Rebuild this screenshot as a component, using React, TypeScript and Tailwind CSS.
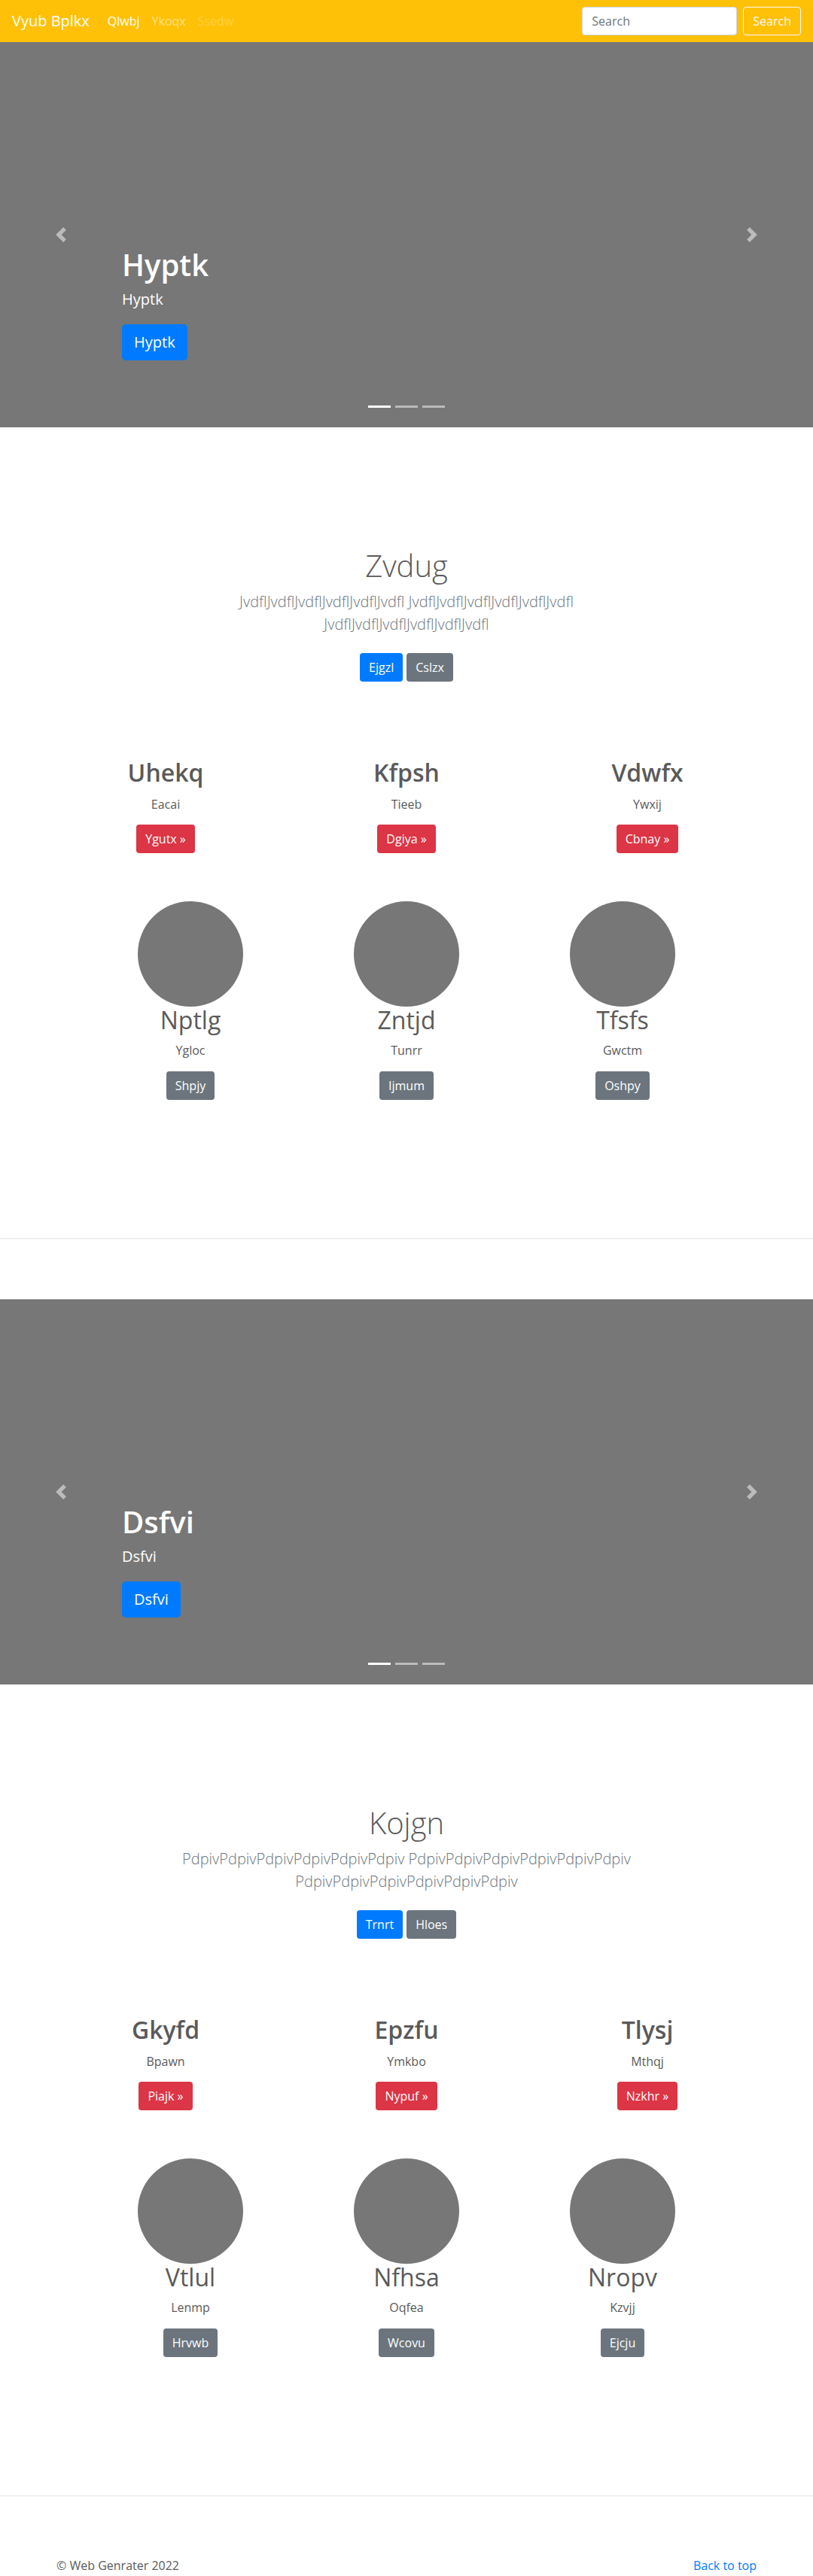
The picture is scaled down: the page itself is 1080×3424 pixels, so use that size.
type Feature = { title: string; text: string; button: string };

type Block = {
  slide: string;
  heading: string;
  lead: string;
  primary: string;
  secondary: string;
  features: Feature[];
  marketing: Feature[];
};

const BLOCKS: Block[] = [
  {
    slide: "Hyptk",
    heading: "Zvdug",
    lead: "JvdflJvdflJvdflJvdflJvdflJvdfl JvdflJvdflJvdflJvdflJvdflJvdfl JvdflJvdflJvdflJvdflJvdflJvdfl",
    primary: "Ejgzl",
    secondary: "Cslzx",
    features: [
      { title: "Uhekq", text: "Eacai", button: "Ygutx »" },
      { title: "Kfpsh", text: "Tieeb", button: "Dgiya »" },
      { title: "Vdwfx", text: "Ywxij", button: "Cbnay »" },
    ],
    marketing: [
      { title: "Nptlg", text: "Ygloc", button: "Shpjy" },
      { title: "Zntjd", text: "Tunrr", button: "Ijmum" },
      { title: "Tfsfs", text: "Gwctm", button: "Oshpy" },
    ],
  },
  {
    slide: "Dsfvi",
    heading: "Kojgn",
    lead: "PdpivPdpivPdpivPdpivPdpivPdpiv PdpivPdpivPdpivPdpivPdpivPdpiv PdpivPdpivPdpivPdpivPdpivPdpiv",
    primary: "Trnrt",
    secondary: "Hloes",
    features: [
      { title: "Gkyfd", text: "Bpawn", button: "Piajk »" },
      { title: "Epzfu", text: "Ymkbo", button: "Nypuf »" },
      { title: "Tlysj", text: "Mthqj", button: "Nzkhr »" },
    ],
    marketing: [
      { title: "Vtlul", text: "Lenmp", button: "Hrvwb" },
      { title: "Nfhsa", text: "Oqfea", button: "Wcovu" },
      { title: "Nropv", text: "Kzvjj", button: "Ejcju" },
    ],
  },
];

function Chevron(props: { next?: boolean }) {
  // same glyph bootstrap 4 uses for carousel controls
  const d = props.next
    ? "M2.75 0l-1.5 1.5L3.75 4l-2.5 2.5L2.75 8l4-4-4-4z"
    : "M5.25 0l-4 4 4 4 1.5-1.5L4.25 4l2.5-2.5L5.25 0z";
  return (
    <svg width="20" height="20" viewBox="0 0 8 8" fill="#fff">
      <path d={d} />
    </svg>
  );
}

function Navbar() {
  return (
    <nav className="flex h-14 items-center bg-[#ffc107] px-4">
      <a className="mr-4 text-xl leading-[30px] text-white">Vyub Bplkx</a>
      <ul className="flex">
        <li className="px-2 text-white">Qlwbj</li>
        <li className="px-2 text-white/50">Ykoqx</li>
        <li className="px-2 text-white/25">Ssedw</li>
      </ul>
      <form className="ml-auto flex items-center">
        <input
          placeholder="Search"
          className="mr-2 h-[38px] w-[206px] rounded border border-[#ced4da] bg-white px-3 text-base text-[#495057] placeholder:text-[#6c757d]"
        />
        <button
          type="button"
          className="h-[38px] rounded border border-[#f8f9fa] px-3 text-base text-[#f8f9fa]"
        >
          Search
        </button>
      </form>
    </nav>
  );
}

function Carousel(props: { title: string }) {
  return (
    <div className="relative h-[512px] bg-[#777]">
      <div className="absolute top-0 bottom-0 left-0 flex w-[15%] items-center justify-center opacity-50">
        <Chevron />
      </div>
      <div className="absolute top-0 right-0 bottom-0 flex w-[15%] items-center justify-center opacity-50">
        <Chevron next />
      </div>
      <div className="absolute top-[272px] right-[15%] left-[15%] text-white">
        <h1 className="mb-[7px] text-[40px] leading-[48px] font-semibold">
          {props.title}
        </h1>
        <p className="mb-[18px] text-xl leading-[30px]">{props.title}</p>
        <a className="inline-flex h-12 items-center rounded-[5px] bg-[#007bff] px-4 text-xl">
          {props.title}
        </a>
      </div>
      <ol className="absolute top-[483px] left-1/2 flex -translate-x-1/2 gap-[6px]">
        <li className="h-[3px] w-[30px] bg-white" />
        <li className="h-[3px] w-[30px] bg-white/50" />
        <li className="h-[3px] w-[30px] bg-white/50" />
      </ol>
    </div>
  );
}

function Section(props: { block: Block }) {
  const b = props.block;
  return (
    <>
      <Carousel title={b.slide} />

      <section className="pt-[160px] text-center">
        <div className="mx-auto max-w-[640px] px-[15px]">
          <h1 className="mb-[9px] text-[40px] leading-[48px] font-light">
            {b.heading}
          </h1>
          <p className="mb-[23px] text-xl leading-[30px] font-light text-[#6c757d]">
            {b.lead}
          </p>
          <div className="flex justify-center gap-[5px]">
            <a className="flex h-[38px] items-center rounded bg-[#007bff] px-3 text-white">
              {b.primary}
            </a>
            <a className="flex h-[38px] items-center rounded bg-[#6c757d] px-3 text-white">
              {b.secondary}
            </a>
          </div>
        </div>
      </section>

      <div className="mx-auto mt-[102px] grid w-[960px] grid-cols-3">
        {b.features.map((f) => (
          <div key={f.title} className="flex flex-col items-center">
            <h2 className="mb-[11px] text-[32px] leading-[38px] font-semibold">
              {f.title}
            </h2>
            <p className="mb-[15px] leading-6">{f.text}</p>
            <a className="flex h-[38px] items-center rounded bg-[#dc3545] px-3 text-white">
              {f.button}
            </a>
          </div>
        ))}
      </div>

      <div className="mx-auto mt-16 grid w-[861px] grid-cols-3">
        {b.marketing.map((m) => (
          <div key={m.title} className="flex flex-col items-center">
            <div className="h-[140px] w-[140px] rounded-full bg-[#777]" />
            <h2 className="-mt-px mb-[9px] text-[32px] leading-[38px] font-normal">
              {m.title}
            </h2>
            <p className="mb-4 leading-6">{m.text}</p>
            <a className="flex h-[38px] items-center rounded bg-[#6c757d] px-3 text-white">
              {m.button}
            </a>
          </div>
        ))}
      </div>

      <div className="mt-[184px] mb-20 h-px bg-black/10" />
    </>
  );
}

export default function App() {
  return (
    <div className="bg-white font-['Open_Sans','Noto_Sans',sans-serif] text-base text-[#5a5a5a]">
      <Navbar />
      {BLOCKS.map((b) => (
        <Section key={b.heading} block={b} />
      ))}
      <footer className="mx-auto flex w-[960px] justify-between px-[15px] leading-6">
        <p>© Web Genrater 2022</p>
        <a className="text-[#007bff]">Back to top</a>
      </footer>
    </div>
  );
}
